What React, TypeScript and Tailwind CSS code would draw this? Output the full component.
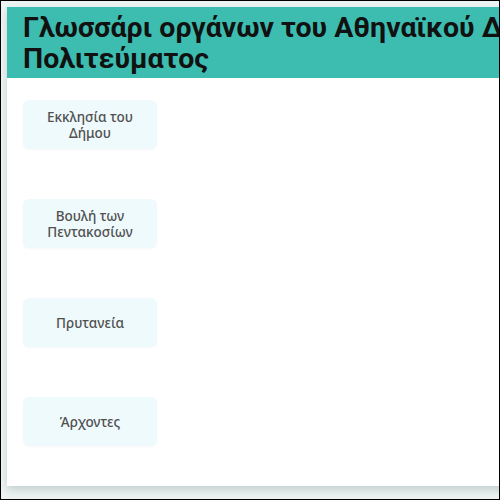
const organs = [
  'Εκκλησία του Δήμου',
  'Βουλή των Πεντακοσίων',
  'Πρυτανεία',
  'Άρχοντες',
];

export default function App() {
  return (
    <div className="w-[500px] h-[500px] overflow-hidden border border-black bg-[#eef4f4]">
      <div className="ml-[6px] mt-[6px] w-[780px] h-[479px] bg-white shadow-[0_4px_8px_rgba(120,140,140,0.35)]">
        <header className="bg-[#3dbdb0] px-4 pt-[5px] pb-[4px]">
          <h1
            className="max-w-[700px] text-[28.5px] leading-[31px] font-bold text-[#111]"
            style={{ fontFamily: 'Roboto, "Noto Sans", sans-serif' }}
          >
            Γλωσσάρι οργάνων του Αθηναϊκού Δημοκρατικού Πολιτεύματος
          </h1>
        </header>
        <div className="flex flex-col gap-[50px] pt-[22px] pl-4">
          {organs.map((name) => (
            <button
              key={name}
              className="w-[134px] h-[49px] px-4 rounded-md bg-[#effafc] flex items-center justify-center text-center text-[13.5px] leading-[16px] text-[#505050] font-medium shadow-[0_1px_2px_rgba(0,0,0,0.03)]"
              style={{ fontFamily: '"Noto Sans", "DejaVu Sans", sans-serif' }}
            >
              {name}
            </button>
          ))}
        </div>
      </div>
    </div>
  );
}
